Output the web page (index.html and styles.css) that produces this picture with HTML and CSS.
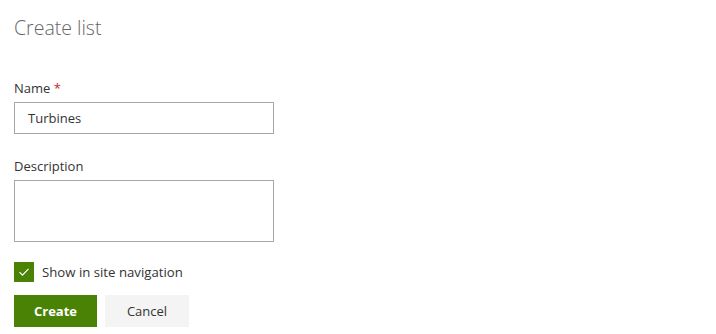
FILE: index.html
```html
<!DOCTYPE html>
<html>
<head>
<meta charset="utf-8">
<link rel="stylesheet" href="styles.css">
</head>
<body>
<div class="panel">
  <h1 class="title">Create list</h1>
  <div class="field field-name">
    <label class="label">Name <span class="req">*</span></label>
    <div class="input">Turbines</div>
  </div>
  <div class="field field-desc">
    <label class="label">Description</label>
    <div class="textarea"></div>
  </div>
  <div class="check-row">
    <span class="checkbox">
      <svg width="12" height="12" viewBox="0 0 12 12"><path d="M1.5 6.2 L4.5 9.2 L10.5 2.8" fill="none" stroke="#fff" stroke-width="1.2"/></svg>
    </span>
    <span class="check-label">Show in site navigation</span>
  </div>
  <div class="actions">
    <button class="btn btn-primary">Create</button>
    <button class="btn btn-default">Cancel</button>
  </div>
</div>
</body>
</html>
```

FILE: styles.css
```css
* { box-sizing: border-box; }
html, body { margin: 0; padding: 0; background: #fff; }
body {
  font-family: "Open Sans", "Noto Sans", sans-serif;
  color: #333;
  font-size: 13px;
}
.panel {
  display: flex;
  flex-direction: column;
  align-items: flex-start;
  padding: 14px 0 0 14px;
}
.title {
  margin: 0;
  font-weight: 300;
  font-size: 19.5px;
  line-height: 28px;
  color: #666;
}
.field { display: flex; flex-direction: column; }
.field-name { margin-top: 36px; }
.field-desc { margin-top: 22px; }
.label {
  line-height: 20px;
  height: 20px;
  margin-bottom: 4px;
  color: #333;
}
.req { color: #c4262e; }
.input {
  width: 260px;
  height: 32px;
  border: 1px solid #a6a6a6;
  padding: 0 13px;
  line-height: 30px;
  color: #333;
}
.textarea {
  width: 260px;
  height: 62px;
  border: 1px solid #a6a6a6;
}
.check-row {
  display: flex;
  align-items: center;
  margin-top: 20px;
}
.checkbox {
  width: 20px;
  height: 20px;
  background: #498205;
  display: flex;
  align-items: center;
  justify-content: center;
}
.check-label { margin-left: 8px; line-height: 20px; font-size: 13.2px; }
.actions {
  display: flex;
  gap: 8px;
  margin-top: 13px;
}
.btn {
  font-family: inherit;
  font-size: 13px;
  height: 32px;
  border: none;
  padding: 0;
  min-width: 83px;
  cursor: pointer;
}
.btn-primary {
  background: #498205;
  color: #fff;
  font-weight: 700;
}
.btn-default {
  background: #f4f4f4;
  color: #333;
  width: 84px;
}
```
